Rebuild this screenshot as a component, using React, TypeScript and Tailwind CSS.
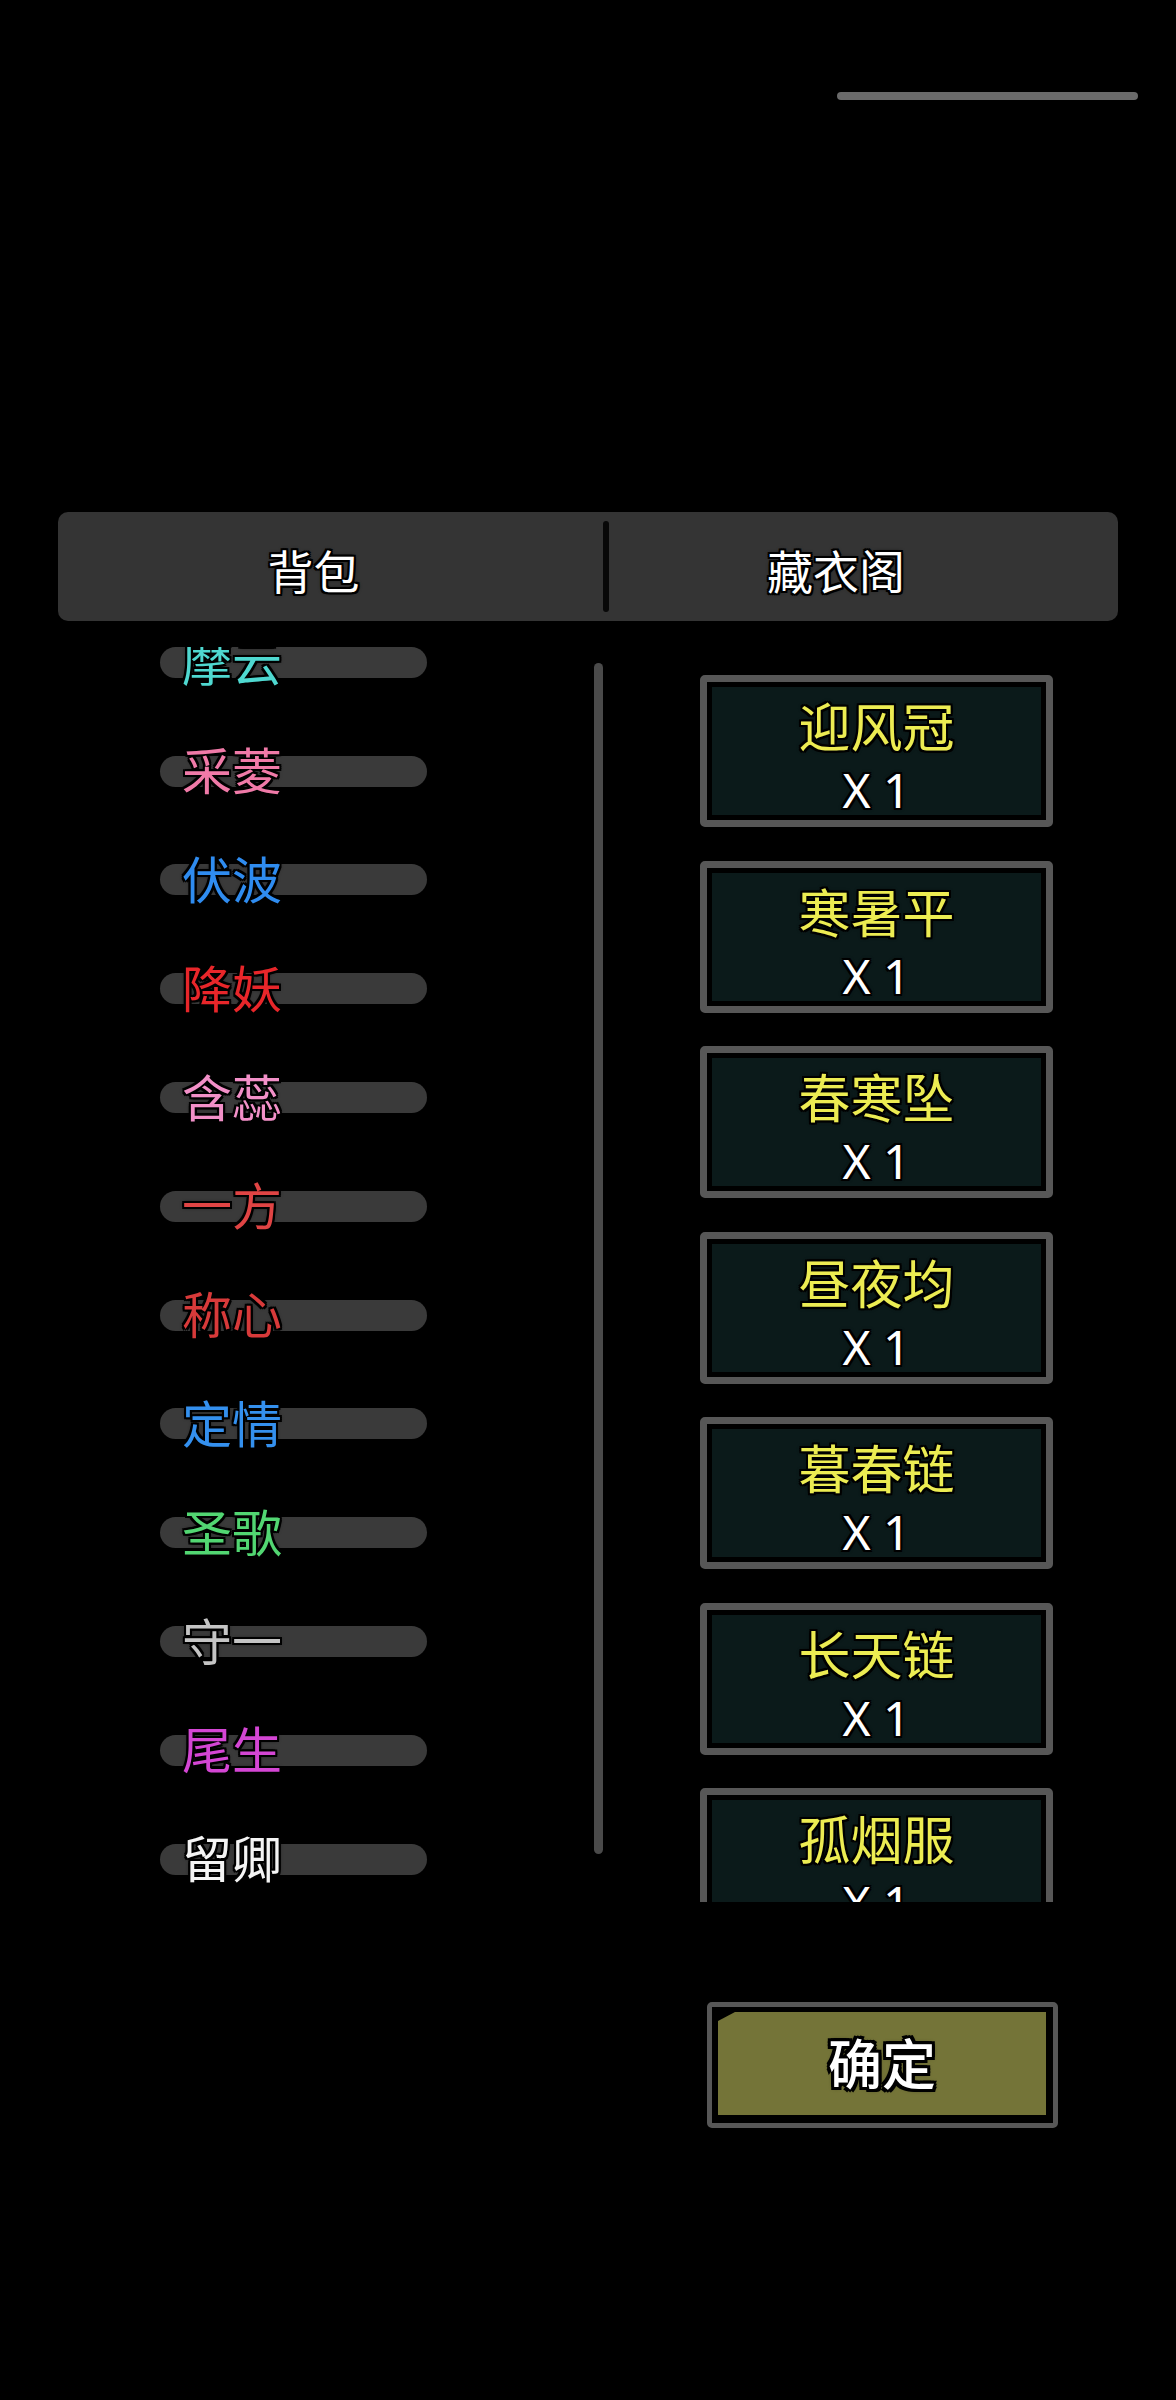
import React from "react"

const FONT = "font-['Noto_Sans','Noto_Sans_CJK_SC',sans-serif]"
const OUTLINE =
  "[text-shadow:2px_0_0_#000,-2px_0_0_#000,0_2px_0_#000,0_-2px_0_#000,2px_2px_0_#000,-2px_-2px_0_#000,2px_-2px_0_#000,-2px_2px_0_#000,0_0_4px_#000]"
const OUTLINE_THICK =
  "[text-shadow:3px_0_0_#000,-3px_0_0_#000,0_3px_0_#000,0_-3px_0_#000,3px_3px_0_#000,-3px_-3px_0_#000,3px_-3px_0_#000,-3px_3px_0_#000,0_0_5px_#000]"

const bag = [
  { name: "摩云", color: "text-[#4fd8d0]" },
  { name: "采菱", color: "text-[#f07aa8]" },
  { name: "伏波", color: "text-[#2f8cf0]" },
  { name: "降妖", color: "text-[#e8262a]" },
  { name: "含蕊", color: "text-[#f290c8]" },
  { name: "一方", color: "text-[#e04444]" },
  { name: "称心", color: "text-[#d83a3a]" },
  { name: "定情", color: "text-[#3490ee]" },
  { name: "圣歌", color: "text-[#52d672]" },
  { name: "守一", color: "text-[#c4c4c4]" },
  { name: "尾生", color: "text-[#d446d4]" },
  { name: "留卿", color: "text-[#f4f4f4]" },
]

const wardrobe = ["迎风冠", "寒暑平", "春寒坠", "昼夜均", "暮春链", "长天链", "孤烟服"]

function BagRow({ name, color }: { name: string; color: string }) {
  return (
    <div className="grid h-[108.8px] items-center">
      <div className="col-start-1 row-start-1 h-[31px] w-[267px] rounded-full bg-[#3a3a3a]" />
      <span
        className={`col-start-1 row-start-1 ml-[22px] text-[50px] leading-none ${color} ${OUTLINE}`}
      >
        {name}
      </span>
    </div>
  )
}

function ItemCard({ name }: { name: string }) {
  return (
    <div className="h-[152px] w-[353px] shrink-0 rounded-[5px] border-[7px] border-[#575757] bg-black p-[5px]">
      <div className="flex h-full flex-col items-center bg-[#0b1a1a] pt-[10px]">
        <span className={`text-[52px] leading-[60px] text-[#ecec52] ${OUTLINE}`}>{name}</span>
        <span className={`text-[48px] leading-[66px] text-white ${OUTLINE}`}>X 1</span>
      </div>
    </div>
  )
}

export default function App() {
  return (
    <div className={`min-h-[2400px] w-[1176px] bg-black ${FONT}`}>
      <div className="flex justify-end pr-[38px] pt-[92px]">
        <div className="h-[8px] w-[301px] rounded-full bg-[#6a6a6a]" />
      </div>

      <div className="mx-[58px] mt-[412px] flex h-[109px] items-center rounded-[10px] bg-[#343434]">
        <div className="flex w-[545px] justify-center pr-[34px] pt-[8px]">
          <span className={`text-[46px] leading-none text-white ${OUTLINE}`}>背包</span>
        </div>
        <div className="h-[91px] w-[6px] rounded-full bg-[#080808]" />
        <div className="flex flex-1 justify-center pr-[55px] pt-[8px]">
          <span className={`text-[46px] leading-none text-white ${OUTLINE}`}>藏衣阁</span>
        </div>
      </div>

      <div className="mt-[26px] flex h-[1255px]">
        <div className="w-[594px] overflow-hidden pl-[160px]">
          <div className="-mt-[39px]">
            {bag.map((b) => (
              <BagRow key={b.name} name={b.name} color={b.color} />
            ))}
          </div>
        </div>
        <div className="mt-[16px] h-[1191px] w-[9px] rounded-full bg-[#4a4a4a]" />
        <div className="overflow-hidden pl-[97px] pt-[28px]">
          <div className="flex flex-col gap-[33.5px]">
            {wardrobe.map((w) => (
              <ItemCard key={w} name={w} />
            ))}
          </div>
        </div>
      </div>

      <div className="ml-[707px] mt-[100px] h-[126px] w-[351px] rounded-[5px] border-[5px] border-[#575757] bg-black pb-[8px] pl-[6px] pr-[7px] pt-[5px]">
        <div className="flex h-full items-center justify-center bg-[#747438] [clip-path:polygon(17px_0,100%_0,100%_100%,0_100%,0_9px)]">
          <span className={`text-[54px] font-medium leading-none text-white ${OUTLINE_THICK}`}>确定</span>
        </div>
      </div>
    </div>
  )
}
